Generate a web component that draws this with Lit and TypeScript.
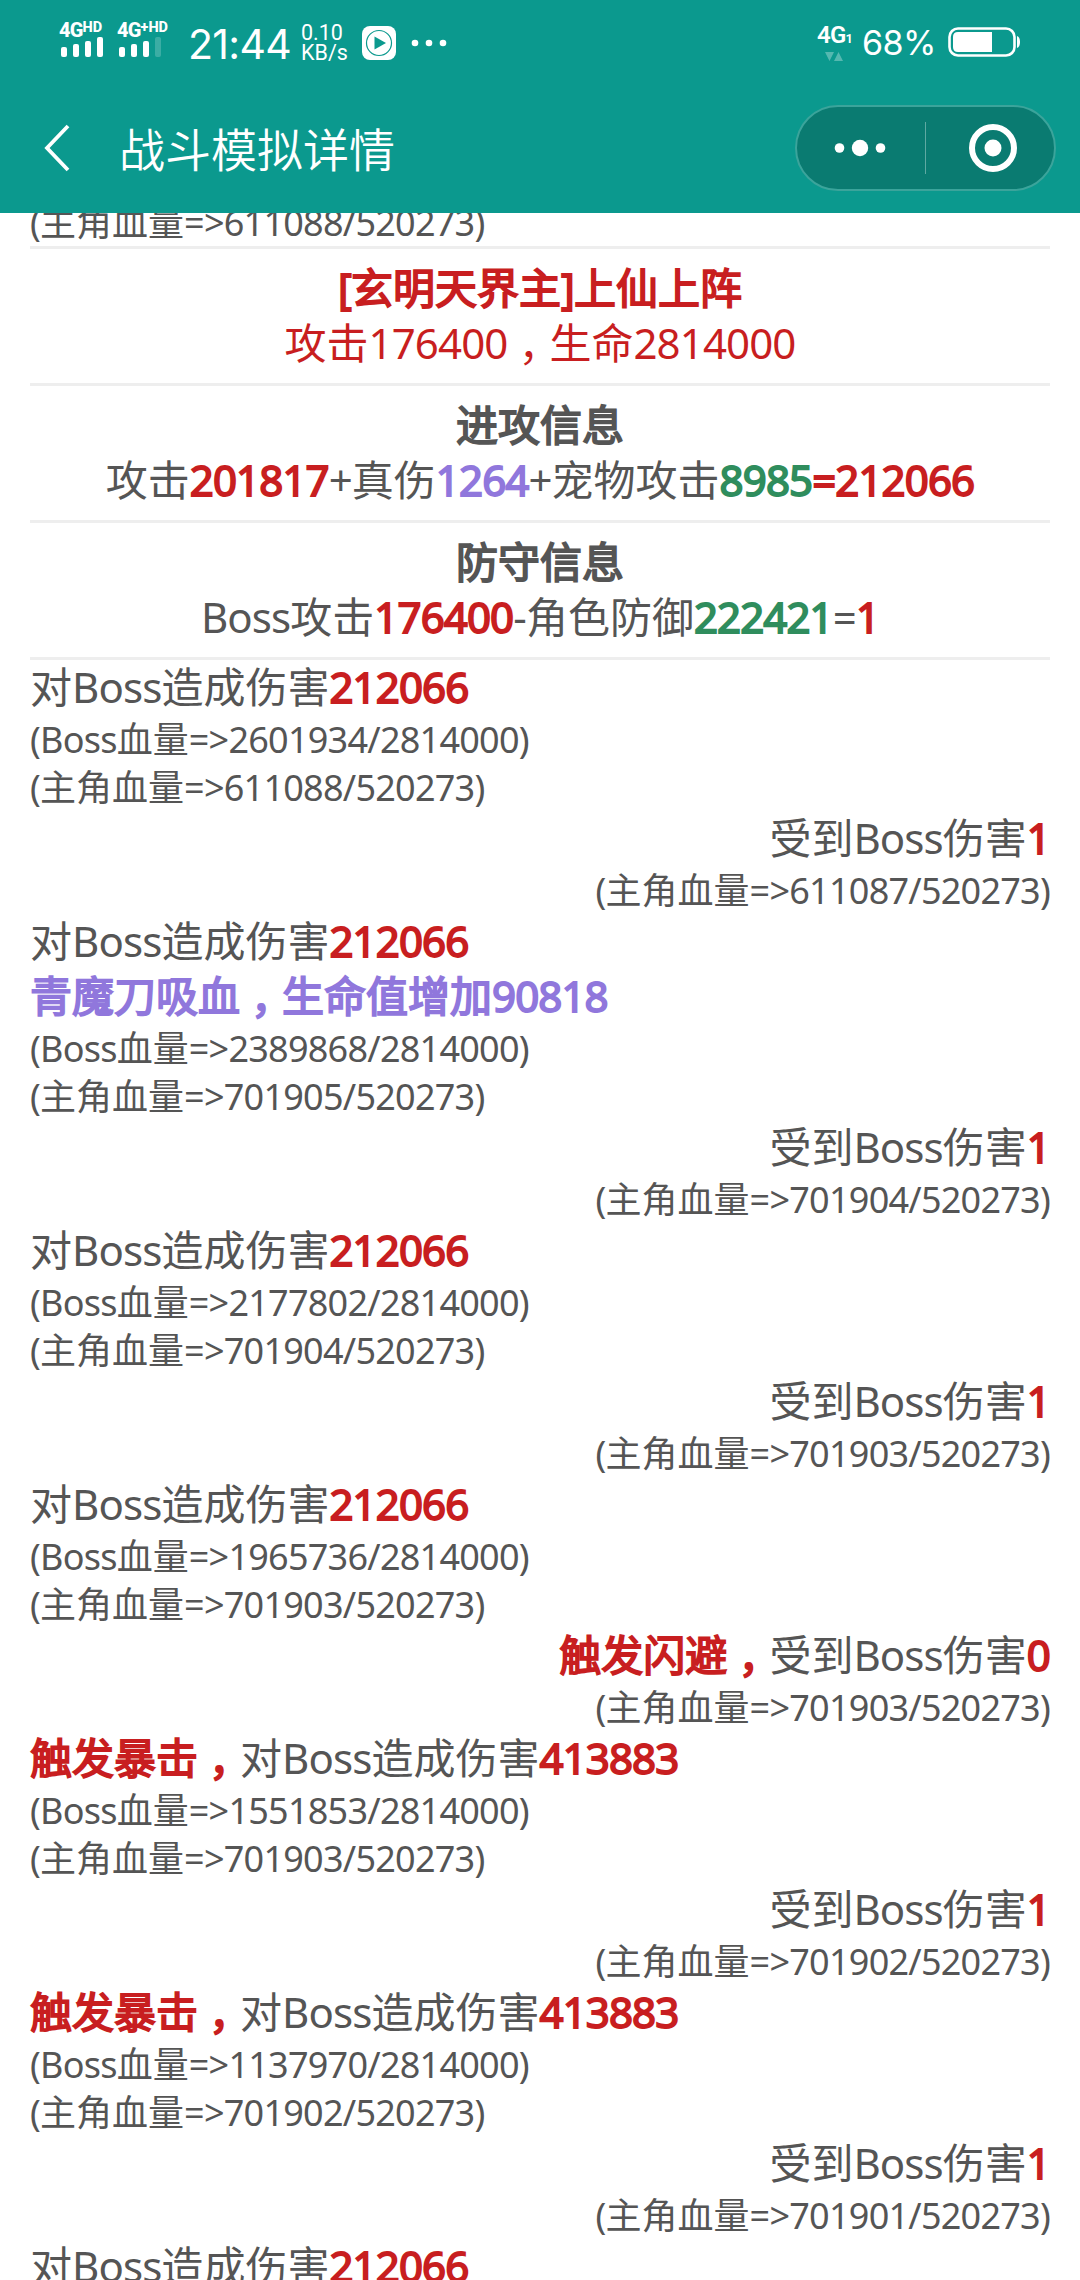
import { LitElement, html, css, svg } from 'lit';
import { customElement, property } from 'lit/decorators.js';
import { classMap } from 'lit/directives/class-map.js';

type Tone = 'red' | 'green' | 'purple' | 'strong' | 'redplain';
type Part = string | [string, Tone];

interface Line {
  parts: Part[];
  small?: boolean;
}

interface Round {
  side: 'left' | 'right' | 'center';
  lines: Line[];
}

const big = (...parts: Part[]): Line => ({ parts });
const small = (text: string): Line => ({ parts: [text], small: true });

const BOSS_MAX = 2814000;
const HERO_MAX = 520273;

const bossHp = (hp: number) => small(`(Boss血量=>${hp}/${BOSS_MAX})`);
const heroHp = (hp: number) => small(`(主角血量=>${hp}/${HERO_MAX})`);

const attack = (damage: number, boss: number, hero: number, extra: Line[] = []): Round => ({
  side: 'left',
  lines: [
    damage > 400000
      ? big(['触发暴击，', 'red'], '对Boss造成伤害', [`${damage}`, 'red'])
      : big('对Boss造成伤害', [`${damage}`, 'red']),
    ...extra,
    bossHp(boss),
    heroHp(hero),
  ],
});

const hit = (damage: number, hero: number): Round => ({
  side: 'right',
  lines: [
    damage === 0
      ? big(['触发闪避，', 'red'], '受到Boss伤害', ['0', 'red'])
      : big('受到Boss伤害', [`${damage}`, 'red']),
    heroHp(hero),
  ],
});

const summary: Round[] = [
  {
    side: 'center',
    lines: [big(['[玄明天界主]上仙上阵', 'red']), big(['攻击176400，生命2814000', 'redplain'])],
  },
  {
    side: 'center',
    lines: [
      big(['进攻信息', 'strong']),
      big('攻击', ['201817', 'red'], '+真伤', ['1264', 'purple'], '+宠物攻击', ['8985', 'green'], ['=212066', 'red']),
    ],
  },
  {
    side: 'center',
    lines: [
      big(['防守信息', 'strong']),
      big('Boss攻击', ['176400', 'red'], '-角色防御', ['222421', 'green'], '=', ['1', 'red']),
    ],
  },
];

const rounds: Round[] = [
  attack(212066, 2601934, 611088),
  hit(1, 611087),
  attack(212066, 2389868, 701905, [big(['青魔刀吸血，生命值增加90818', 'purple'])]),
  hit(1, 701904),
  attack(212066, 2177802, 701904),
  hit(1, 701903),
  attack(212066, 1965736, 701903),
  hit(0, 701903),
  attack(413883, 1551853, 701903),
  hit(1, 701902),
  attack(413883, 1137970, 701902),
  hit(1, 701901),
];

@customElement('status-bar')
export class StatusBar extends LitElement {
  static styles = css`
    :host {
      display: flex;
      justify-content: space-between;
      height: 85px;
      padding: 0 60px 0 59px;
      color: #fff;
      font-family: Inter, Roboto, sans-serif;
    }
    .side {
      display: flex;
      align-items: flex-start;
    }
    svg {
      display: block;
      fill: #fff;
    }
    .signal {
      width: 58px;
      padding-top: 20px;
    }
    .net {
      display: flex;
      align-items: flex-start;
      height: 17px;
      font-family: Roboto, sans-serif;
      font-size: 20px;
      font-weight: 800;
      line-height: 20px;
      letter-spacing: -0.8px;
    }
    .net sup {
      font-size: 14.5px;
      line-height: 15px;
      letter-spacing: 0;
      font-weight: 800;
    }
    .clock {
      width: 113px;
      margin-left: 13px;
      padding-top: 20px;
      font-size: 41px;
      line-height: 48px;
      letter-spacing: -0.7px;
      white-space: nowrap;
    }
    .speed {
      width: 61px;
      padding-top: 23px;
      font-family: Roboto, sans-serif;
      font-size: 21.5px;
      line-height: 20px;
      white-space: nowrap;
    }
    .app {
      margin-top: 26px;
    }
    .dots {
      margin: 39px 0 0 15px;
    }
    .data {
      width: 45px;
      padding-top: 24px;
      font-family: Roboto, sans-serif;
      font-size: 24px;
      line-height: 23px;
      font-weight: 600;
      letter-spacing: -0.8px;
    }
    .data small {
      font-size: 13px;
    }
    .data svg {
      margin: 2px 0 0 8px;
    }
    .percent {
      width: 86px;
      padding-top: 22px;
      font-size: 34px;
      line-height: 42px;
      letter-spacing: -0.5px;
    }
    .battery {
      margin-top: 27px;
    }
  `;

  bars(on: number) {
    const tops = [10, 7, 4, 0];
    return svg`${tops.map(
      (y, i) => svg`<rect x=${2 + i * 12} y=${y} width="6" height=${20 - y} rx="2" opacity=${i < on ? 1 : 0.2}></rect>`
    )}`;
  }

  render() {
    return html`
      <div class="side">
        <div class="signal">
          <div class="net">4G<sup>HD</sup></div>
          <svg width="48" height="20">${this.bars(4)}</svg>
        </div>
        <div class="signal">
          <div class="net">4G<sup>+HD</sup></div>
          <svg width="48" height="20">${this.bars(3)}</svg>
        </div>
        <div class="clock">21:44</div>
        <div class="speed">0.10<br />KB/s</div>
        <svg class="app" width="34" height="34">
          <rect width="34" height="34" rx="8"></rect>
          <circle cx="17" cy="17" r="12.5" fill="none" stroke="#0b998e" stroke-width="1.2"></circle>
          <path d="M12.5 10.5 L24 17 L12.5 23.5 Z" fill="#0b998e"></path>
        </svg>
        <svg class="dots" width="36" height="8">
          <circle cx="4" cy="4" r="3.3"></circle>
          <circle cx="18" cy="4" r="3.3"></circle>
          <circle cx="32" cy="4" r="3.3"></circle>
        </svg>
      </div>
      <div class="side">
        <div class="data">
          4G<small>1</small>
          <svg width="18" height="9" opacity="0.3">
            <path d="M0 0 H9 L4.5 9 Z M9 9 H18 L13.5 0 Z"></path>
          </svg>
        </div>
        <div class="percent">68%</div>
        <svg class="battery" width="72" height="30">
          <rect x="1.5" y="1.5" width="65" height="27" rx="8.5" fill="none" stroke="#fff" stroke-width="2.6"></rect>
          <path d="M10 5 H44 V25 H10 Q5 25 5 20 V10 Q5 5 10 5 Z"></path>
          <path d="M69 9 Q72 10 72 15 Q72 20 69 21 Z"></path>
        </svg>
      </div>
    `;
  }
}

@customElement('title-bar')
export class TitleBar extends LitElement {
  @property() heading = '';

  static styles = css`
    :host {
      display: flex;
      align-items: center;
      height: 128px;
      padding: 0 24px 0 44px;
      box-sizing: border-box;
      color: #fff;
    }
    svg {
      display: block;
    }
    h1 {
      flex: 1;
      margin: 0 0 0 49px;
      font-size: 46px;
      font-weight: 350;
      line-height: 60px;
    }
    .back {
      margin-bottom: 2px;
    }
    .capsule {
      display: flex;
      align-items: center;
      width: 261px;
      height: 86px;
      box-sizing: border-box;
      margin-bottom: 2px;
      border: 2px solid #3ba49b;
      border-radius: 43px;
      background: #0a7b71;
    }
    .capsule svg {
      flex: none;
    }
  `;

  render() {
    return html`
      <svg class="back" width="26" height="48" fill="none" stroke="#fff" stroke-width="3.8">
        <path d="M24 2 L3 24 L24 46"></path>
      </svg>
      <h1>${this.heading}</h1>
      <div class="capsule">
        <svg width="257" height="82" fill="#fff">
          <circle cx="42.5" cy="41" r="4.8"></circle>
          <circle cx="63" cy="41" r="8.2"></circle>
          <circle cx="83.5" cy="41" r="4.8"></circle>
          <rect x="128" y="15" width="1" height="52" opacity="0.35"></rect>
          <circle cx="196" cy="41" r="21" fill="none" stroke="#fff" stroke-width="6"></circle>
          <circle cx="196" cy="41" r="8.5"></circle>
        </svg>
      </div>
    `;
  }
}

@customElement('battle-line')
export class BattleLine extends LitElement {
  @property({ attribute: false }) line!: Line;

  static styles = css`
    :host {
      display: block;
    }
    .line {
      height: 55px;
      font-size: 42px;
      line-height: 54px;
      white-space: nowrap;
    }
    .line.small {
      height: 48px;
      font-size: 36px;
      line-height: 50px;
    }
    .red,
    .green,
    .purple,
    .strong {
      -webkit-text-stroke: 1.8px currentColor;
    }
    .red,
    .redplain {
      color: #c81e20;
    }
    .green {
      color: #2f8d5d;
    }
    .purple {
      color: #9077dc;
    }
    .latin {
      letter-spacing: -0.021em;
    }
    .comma {
      font-family: 'Noto Sans CJK TC', sans-serif;
      line-height: 0;
      vertical-align: -0.34em;
    }
  `;

  // digits and letters are set tighter than the ideographs, commas sit mid-cell
  runs(text: string) {
    return (text.match(/[\x20-\x7e]+|，|[^\x20-\x7e，]+/g) ?? []).map((run) => {
      if (run === '，') return html`<span class="comma" lang="zh-TW">${run}</span>`;
      return run.charCodeAt(0) < 0x7f ? html`<span class="latin">${run}</span>` : run;
    });
  }

  render() {
    return html`<div class=${classMap({ line: true, small: !!this.line.small })}>${this.line.parts.map((part) =>
      typeof part === 'string' ? this.runs(part) : html`<span class=${part[1]}>${this.runs(part[0])}</span>`
    )}</div>`;
  }
}

@customElement('app-root')
export class AppRoot extends LitElement {
  static styles = css`
    :host {
      display: flex;
      flex-direction: column;
      height: 2280px;
      overflow: hidden;
      background: #fff;
      color: #555;
      font-family: 'Noto Sans', 'Noto Sans CJK SC', sans-serif;
    }
    header {
      flex: none;
      height: 213px;
      background: #0b998e;
    }
    main {
      flex: 1;
      min-height: 0;
      padding: 0 30px;
      overflow: hidden;
    }
    /* the list is scrolled a little past its first line */
    .log {
      margin-top: -15px;
    }
    .summary {
      padding: 12px 0;
      border-top: 3px solid #eee;
      text-align: center;
    }
    .rounds {
      border-top: 3px solid #eee;
    }
    .right {
      text-align: right;
    }
  `;

  lines(round: Round) {
    return round.lines.map((line) => html`<battle-line .line=${line}></battle-line>`);
  }

  render() {
    return html`
      <header>
        <status-bar></status-bar>
        <title-bar heading="战斗模拟详情"></title-bar>
      </header>
      <main>
        <div class="log">
          <battle-line .line=${heroHp(611088)}></battle-line>
          ${summary.map((round) => html`<section class="summary">${this.lines(round)}</section>`)}
          <div class="rounds">
            ${rounds.map((round) => html`<section class=${round.side}>${this.lines(round)}</section>`)}
            <battle-line .line=${big('对Boss造成伤害', ['212066', 'red'])}></battle-line>
          </div>
        </div>
      </main>
    `;
  }
}
